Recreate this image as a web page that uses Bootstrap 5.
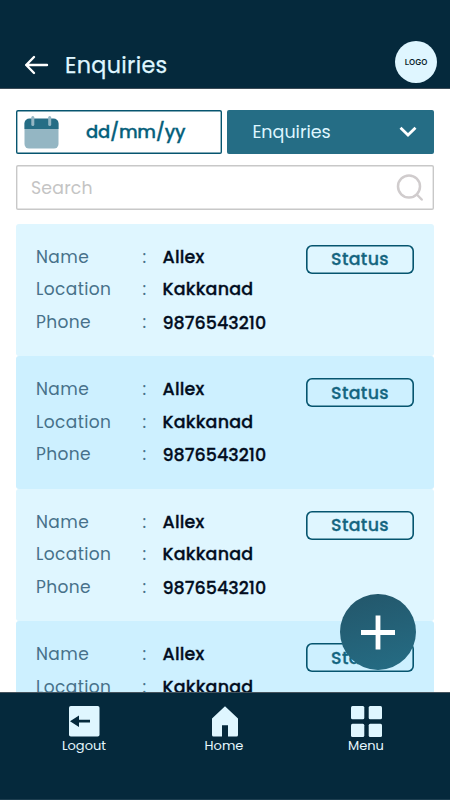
<!DOCTYPE html>
<html lang="en">
<head>
<meta charset="utf-8">
<meta name="viewport" content="width=device-width, initial-scale=1">
<title>Enquiries</title>
<link href="https://cdn.jsdelivr.net/npm/bootstrap@5.3.0/dist/css/bootstrap.min.css" rel="stylesheet">
<style>
  body { font-family: Poppins, Inter, "Open Sans", sans-serif; background: #fff; }
  .screen { height: 800px; width: 450px; }
  .topbar { height: 88.5px; background: #05293c; padding: 41px 13px 0 24px; border-bottom: 1px solid #3c4b57; }
  .title { font-size: 22.3px; line-height: 30px; color: #dff6ff; margin: 10px 0 0 16px; letter-spacing: .3px; -webkit-text-stroke: .25px #dff6ff; }
  .back { margin-top: 14px; }
  .logo { width: 42px; height: 42px; background: #dff6ff; font-family: Inter, sans-serif; font-size: 8px; font-weight: 600; color: #0a1f2c; }
  .content { padding: 21.5px 16px 0; }
  .filters { gap: 5px; }
  .filter { height: 44px; border-radius: 2px; width: 206.4px; flex: none; }
  .date { box-shadow: inset 0 0 0 1.4px #06556f; color: #06607b; padding-left: 8px; }
  .date-text { font-size: 18px; font-weight: 500; letter-spacing: -.25px; margin: -2px 0 0 27px; -webkit-text-stroke: .3px #06607b; }
  .kind { background: #256d85; color: #dff6ff; font-size: 17.5px; padding: 0 17px 0 25px; }
  .search { height: 45px; margin-top: 11px; box-shadow: inset 0 0 0 1.4px #c8c8c8; border-radius: 2px; color: #c4c4c4; font-size: 17.3px; padding: 0 10px 0 15px; letter-spacing: .2px; }
  .search span { padding-top: 2px; }
  .records { margin-top: 13.8px; }
  .record { height: 132.5px; flex: none; background: #dff6ff; border-radius: 3px; padding: 17px 20px 0; }
  .record:nth-child(even) { background: #cdf0ff; }
  .line { height: 32.6px; line-height: 32.6px; font-size: 17px; }
  .key { width: 106.4px; color: #47718a; letter-spacing: .4px; }
  .colon { width: 20.1px; color: #47718a; }
  .value { color: #020d1e; font-weight: 500; font-size: 17.5px; letter-spacing: .2px; -webkit-text-stroke: .3px #020d1e; }
  .phone { position: relative; top: 1px; letter-spacing: 0; }
  .status { width: 108px; height: 29px; margin-top: 4px; box-shadow: inset 0 0 0 1.6px #06556f; border-radius: 6px; color: #146580; font-size: 17.4px; font-weight: 500; letter-spacing: .35px; -webkit-text-stroke: .3px #146580; }
  .record:nth-child(n+2) .status { margin-top: 5px; }
  .add { position: absolute; left: 340px; top: 593.5px; width: 76px; height: 76.5px; background: linear-gradient(165deg, #23566a, #256d85); }
  .tabs { height: 107.6px; background: #05293c; border-top: 1px solid #46535d; border-bottom: 1px solid #1d3e50; padding: 13px 54px 0; }
  .tab { width: 60px; color: #e6f8ff; font-size: 13px; line-height: 18px; }
  .home-label { margin-right: 2px; }
</style>
<script src="https://cdn.jsdelivr.net/npm/bootstrap@5.3.0/dist/js/bootstrap.bundle.min.js"></script>
</head>
<body>
<div class="screen d-flex flex-column position-relative overflow-hidden">
  <header class="topbar d-flex align-items-start flex-shrink-0">
    <svg class="back" width="25" height="20" viewBox="0 0 25 20" fill="none" stroke="#fff" stroke-width="2.4" stroke-linecap="round" stroke-linejoin="round"><path d="M10 2 2.2 10 10 18M2.2 10H23"/></svg>
    <h1 class="title fw-normal">Enquiries</h1>
    <div class="logo rounded-circle d-flex align-items-center justify-content-center ms-auto">LOGO</div>
  </header>

  <main class="content d-flex flex-column flex-grow-1 overflow-hidden">
    <div class="filters d-flex flex-shrink-0">
      <div class="filter date d-flex align-items-center">
        <svg width="35" height="34" viewBox="0 0 35 34"><rect x=".5" y="4" width="34" height="29.5" rx="4.5" fill="#94b6c3"/><path d="M.5 14V8.5a5 5 0 0 1 5-5h24a5 5 0 0 1 5 5V14z" fill="#256d85"/><rect x="7.3" y="1" width="3" height="10" rx="1.5" fill="#94b6c3"/><rect x="24.2" y="1" width="3" height="10" rx="1.5" fill="#94b6c3"/></svg>
        <span class="date-text">dd/mm/yy</span>
      </div>
      <div class="filter kind d-flex align-items-center justify-content-between">
        <span>Enquiries</span>
        <svg width="18" height="12" viewBox="0 0 18 12" fill="none" stroke="#fff" stroke-width="2.8"><path d="m1.5 1.7 7.5 7.3 7.5-7.3"/></svg>
      </div>
    </div>
    <div class="search d-flex align-items-center justify-content-between flex-shrink-0">
      <span>Search</span>
      <svg width="28" height="28" viewBox="0 0 28 28" fill="none" stroke="#d0cccd" stroke-width="2.5" stroke-linecap="round"><circle cx="13" cy="12.5" r="11"/><path d="m20.8 20.5 4.9 5"/></svg>
    </div>

    <section class="records d-flex flex-column">
      <article class="record d-flex justify-content-between">
        <div>
          <div class="line d-flex"><span class="key">Name</span><span class="colon">:</span><span class="value">Allex</span></div>
          <div class="line d-flex"><span class="key">Location</span><span class="colon">:</span><span class="value">Kakkanad</span></div>
          <div class="line d-flex"><span class="key">Phone</span><span class="colon">:</span><span class="value phone">9876543210</span></div>
        </div>
        <div class="status d-flex align-items-center justify-content-center">Status</div>
      </article>
      <article class="record d-flex justify-content-between">
        <div>
          <div class="line d-flex"><span class="key">Name</span><span class="colon">:</span><span class="value">Allex</span></div>
          <div class="line d-flex"><span class="key">Location</span><span class="colon">:</span><span class="value">Kakkanad</span></div>
          <div class="line d-flex"><span class="key">Phone</span><span class="colon">:</span><span class="value phone">9876543210</span></div>
        </div>
        <div class="status d-flex align-items-center justify-content-center">Status</div>
      </article>
      <article class="record d-flex justify-content-between">
        <div>
          <div class="line d-flex"><span class="key">Name</span><span class="colon">:</span><span class="value">Allex</span></div>
          <div class="line d-flex"><span class="key">Location</span><span class="colon">:</span><span class="value">Kakkanad</span></div>
          <div class="line d-flex"><span class="key">Phone</span><span class="colon">:</span><span class="value phone">9876543210</span></div>
        </div>
        <div class="status d-flex align-items-center justify-content-center">Status</div>
      </article>
      <article class="record d-flex justify-content-between">
        <div>
          <div class="line d-flex"><span class="key">Name</span><span class="colon">:</span><span class="value">Allex</span></div>
          <div class="line d-flex"><span class="key">Location</span><span class="colon">:</span><span class="value">Kakkanad</span></div>
        </div>
        <div class="status d-flex align-items-center justify-content-center">Status</div>
      </article>
    </section>
  </main>

  <div class="add rounded-circle d-flex align-items-center justify-content-center">
    <svg width="36" height="36" viewBox="0 0 36 36" stroke="#fff" stroke-width="4.8"><path d="M18 1.5v34M1 18.5h34"/></svg>
  </div>

  <nav class="tabs d-flex justify-content-between align-items-start flex-shrink-0">
    <div class="tab d-flex flex-column align-items-center">
      <svg width="31" height="31" viewBox="0 0 31 31"><rect width="30.5" height="30.5" rx="1.8" fill="#dff6ff"/><path d="M1 15.2 10 9.5v4.3h11v2.8H10v4.4z" fill="#05293c"/></svg>
      <span>Logout</span>
    </div>
    <div class="tab d-flex flex-column align-items-center">
      <svg width="27" height="31" viewBox="0 0 27 31"><path d="M13 .3 26 12.4V29a1.5 1.5 0 0 1-1.5 1.5H16V19.3h-6v11.2H1.5A1.5 1.5 0 0 1 0 29V12.4z" fill="#dff6ff"/></svg>
      <span class="home-label">Home</span>
    </div>
    <div class="tab d-flex flex-column align-items-center">
      <svg width="31" height="31" viewBox="0 0 31 31" fill="#dff6ff"><rect width="13.3" height="13.3" rx="1.5"/><rect x="17.7" width="13.3" height="13.3" rx="1.5"/><rect y="17.7" width="13.3" height="13.3" rx="1.5"/><rect x="17.7" y="17.7" width="13.3" height="13.3" rx="1.5"/></svg>
      <span>Menu</span>
    </div>
  </nav>
</div>
</body>
</html>
